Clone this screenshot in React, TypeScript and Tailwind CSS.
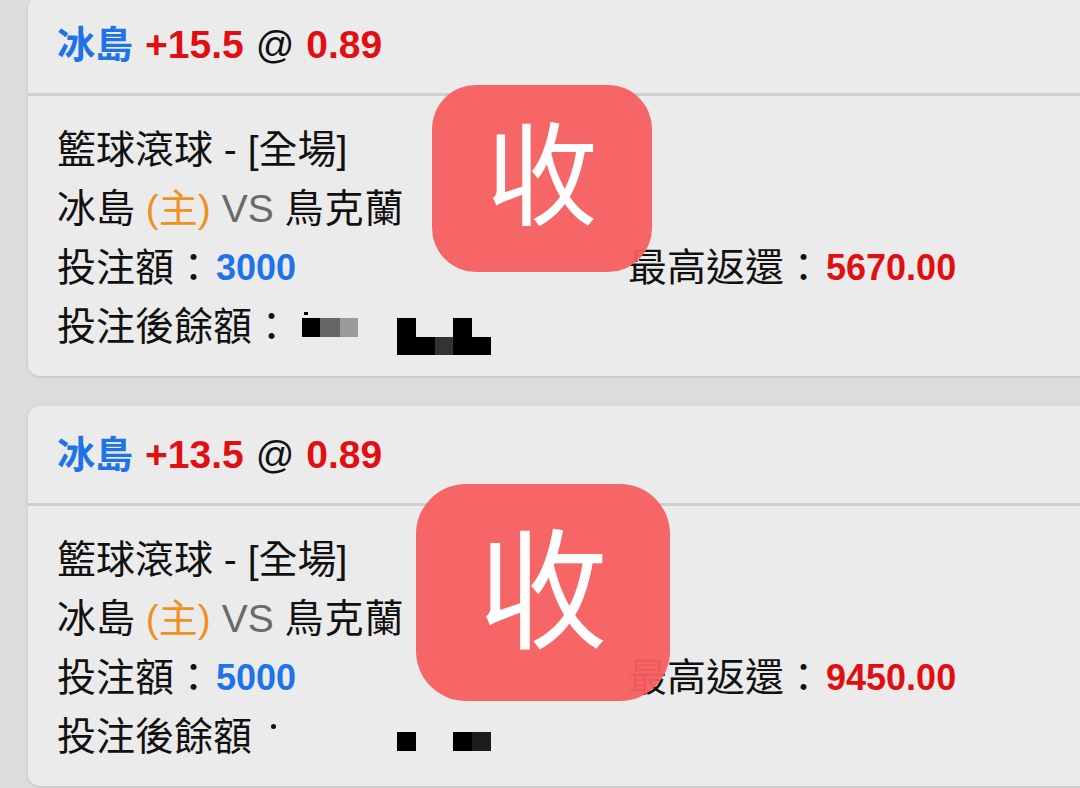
import React from "react";

const FONT = "font-['Liberation_Sans','Noto_Sans_CJK_TC',sans-serif]";

function Redact1() {
  return (
    <svg width="200" height="59" viewBox="0 0 200 59" className="shrink-0">
      <rect x="11" y="21" width="18" height="19" fill="#000" />
      <rect x="29" y="21" width="20" height="19" fill="#666" />
      <rect x="49" y="21" width="18" height="19" fill="#9a9a9a" />
      <rect x="13" y="15" width="4" height="3" fill="#000" />
      <rect x="106" y="21" width="19" height="37" fill="#000" />
      <rect x="125" y="40" width="19" height="18" fill="#000" />
      <rect x="144" y="40" width="18" height="18" fill="#333" />
      <rect x="162" y="21" width="19" height="37" fill="#000" />
      <rect x="181" y="40" width="19" height="18" fill="#000" />
    </svg>
  );
}

function Redact2() {
  return (
    <svg width="200" height="59" viewBox="0 0 200 59" className="shrink-0">
      <rect x="106" y="25" width="19" height="19" fill="#000" />
      <rect x="162" y="25" width="19" height="19" fill="#000" />
      <rect x="181" y="25" width="19" height="19" fill="#1c1c1c" />
    </svg>
  );
}

type CardProps = {
  line: string;
  stake: string;
  ret: string;
  first?: boolean;
  stamp: "a" | "b";
};

function Card({ line, stake, ret, first, stamp }: CardProps) {
  return (
    <div
      className={`relative w-[1072px] rounded-[12px] bg-[#ebebeb] shadow-[0_1px_3px_rgba(0,0,0,0.12)] ${
        first ? "-mt-[4px]" : ""
      }`}
    >
      <div className="flex h-[100px] items-center border-b-[3px] border-[#cfcfcf] px-[29px] text-[38px] leading-none">
        <span className="font-semibold text-[#1e74e6]">冰島</span>
        <span className="ml-[12px] text-[39px] font-bold text-[#e10f12]">{line}</span>
        <span className="ml-[12px] text-[#111]">@</span>
        <span className="ml-[12px] text-[39px] font-bold text-[#e10f12]">0.89</span>
      </div>
      <div className="px-[29px] pt-[24px] pb-[20px] text-[39px] leading-[59px] text-[#111]">
        <div className="flex h-[59px] items-center whitespace-pre">
          籃球滾球 - [全場]
        </div>
        <div className="flex h-[59px] items-center whitespace-pre">
          <span>冰島 </span>
          <span className="text-[#f0901f]">(主)</span>
          <span className="text-[#6a6a6a]"> VS </span>
          <span className="tracking-[1px]">鳥克蘭</span>
        </div>
        <div className="flex h-[59px] items-center">
          <div className="flex w-[571px] items-center">
            <span>投注額：</span>
            <span className="ml-[3px] text-[36px] font-bold text-[#1f74e8]">{stake}</span>
          </div>
          <div className="flex items-center">
            <span>最高返還：</span>
            <span className="ml-[3px] text-[36px] font-bold text-[#e10f12]">{ret}</span>
          </div>
        </div>
        <div className="flex h-[59px] items-center">
          {first ? (
            <>
              <span>投注後餘額：</span>
              <Redact1 />
            </>
          ) : (
            <>
              <span>投注後餘額</span>
              <span className="relative h-[59px] w-[39px] shrink-0">
                <span className="absolute left-[19px] top-[17px] h-[5px] w-[5px] rounded-full bg-[#111]" />
              </span>
              <Redact2 />
            </>
          )}
        </div>
      </div>
      {stamp === "a" ? (
        <div className="absolute left-[404px] top-[89px] flex h-[187px] w-[220px] items-center justify-center rounded-[44px] bg-[#f75f5f] opacity-95">
          <span className="text-[112px] leading-none text-white">收</span>
        </div>
      ) : (
        <div className="absolute left-[388px] top-[78px] flex h-[217px] w-[254px] items-center justify-center rounded-[50px] bg-[#f75f5f] opacity-95">
          <span className="text-[130px] leading-none text-white">收</span>
        </div>
      )}
    </div>
  );
}

export default function App() {
  return (
    <div className={`h-[788px] w-[1080px] overflow-hidden bg-[#dcdcdc] pl-[28px] ${FONT}`}>
      <div className="flex flex-col gap-[30px]">
        <Card line="+15.5" stake="3000" ret="5670.00" first stamp="a" />
        <Card line="+13.5" stake="5000" ret="9450.00" stamp="b" />
      </div>
    </div>
  );
}
